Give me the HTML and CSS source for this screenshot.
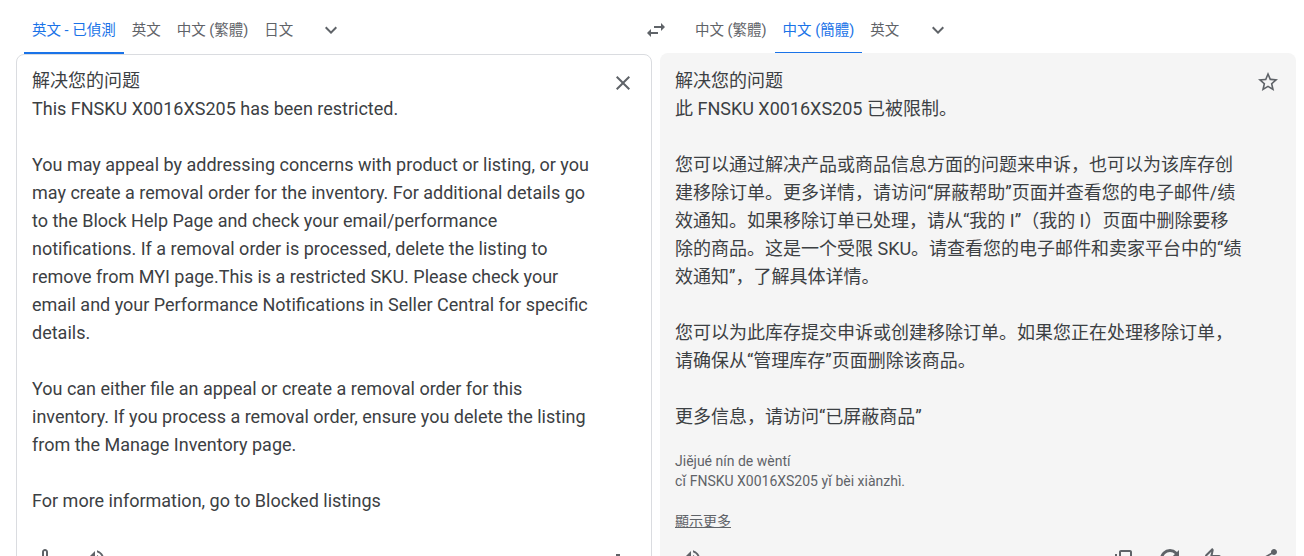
FILE: index.html
```html
<!DOCTYPE html>
<html lang="en">
<head>
    <meta charset="UTF-8">
    <meta name="viewport" content="width=device-width, initial-scale=1.0">
    <title>Translate</title>
    <link rel="stylesheet" href="styles.css">
</head>
<body>

    <div class="lang-bar">
        <div class="lang-side lang-source">
            <div class="tab active">英文 - 已偵測</div>
            <div class="tab">英文</div>
            <div class="tab">中文 (繁體)</div>
            <div class="tab">日文</div>
            <svg class="icon chevron" viewBox="0 0 24 24"><path d="M7.41 8.59 12 13.17l4.59-4.58L18 10l-6 6-6-6z"/></svg>
        </div>
        <svg class="icon swap" viewBox="0 0 24 24"><path d="M6.99 11 3 15l3.99 4v-3H14v-2H6.99zM21 9l-3.99-4v3H10v2h7.01v3z"/></svg>
        <div class="lang-side lang-target">
            <div class="tab">中文 (繁體)</div>
            <div class="tab active">中文 (簡體)</div>
            <div class="tab">英文</div>
            <svg class="icon chevron" viewBox="0 0 24 24"><path d="M7.41 8.59 12 13.17l4.59-4.58L18 10l-6 6-6-6z"/></svg>
        </div>
    </div>

    <div class="panels">
        <div class="card source">
            <div class="card-top">
                <div class="card-text">解决您的问题
This FNSKU X0016XS205 has been restricted.

You may appeal by addressing concerns with product or listing, or you may create a removal order for the inventory. For additional details go to the Block Help Page and check your email/performance notifications. If a removal order is processed, delete the listing to remove from MYI page.This is a restricted SKU. Please check your email and your Performance Notifications in Seller Central for specific details.

You can either file an appeal or create a removal order for this inventory. If you process a removal order, ensure you delete the listing from the Manage Inventory page.

For more information, go to Blocked listings</div>
                <svg class="icon close" viewBox="0 0 24 24"><path d="M19 6.41 17.59 5 12 10.59 6.41 5 5 6.41 10.59 12 5 17.59 6.41 19 12 13.41 17.59 19 19 17.59 13.41 12z"/></svg>
            </div>
            <div class="tools tools-source">
                <svg class="icon" viewBox="0 0 24 24"><path d="M12 14c1.66 0 3-1.34 3-3V5c0-1.66-1.34-3-3-3S9 3.34 9 5v6c0 1.66 1.34 3 3 3zm-1-9c0-.55.45-1 1-1s1 .45 1 1v6c0 .55-.45 1-1 1s-1-.45-1-1V5zm6 6c0 2.76-2.24 5-5 5s-5-2.24-5-5H5c0 3.53 2.61 6.43 6 6.92V21h2v-3.08c3.39-.49 6-3.39 6-6.92h-2z"/></svg>
                <svg class="icon" viewBox="0 0 24 24"><path d="M3 9v6h4l5 5V4L7 9H3zm13.5 3A4.5 4.5 0 0 0 14 7.97v8.05A4.5 4.5 0 0 0 16.5 12zM14 3.23v2.06a7 7 0 0 1 0 13.42v2.06a9 9 0 0 0 0-17.54z"/></svg>
                <svg class="icon tools-end" viewBox="0 0 24 24"><path d="M10 7h4v12h-4z"/></svg>
            </div>
        </div>

        <div class="card target">
            <div class="card-top">
                <div class="card-text">解决您的问题
此 FNSKU X0016XS205 已被限制。

您可以通过解决产品或商品信息方面的问题来申诉，也可以为该库存创建移除订单。更多详情，请访问“屏蔽帮助”页面并查看您的电子邮件/绩效通知。如果移除订单已处理，请从“我的 I”（我的 I）页面中删除要移除的商品。这是一个受限 SKU。请查看您的电子邮件和卖家平台中的“绩效通知”，了解具体详情。

您可以为此库存提交申诉或创建移除订单。如果您正在处理移除订单，请确保从“管理库存”页面删除该商品。

更多信息，请访问“已屏蔽商品”</div>
                <svg class="icon star" viewBox="0 0 24 24"><path d="m22 9.24-7.19-.62L12 2 9.19 8.63 2 9.24l5.46 4.73L5.82 21 12 17.27 18.18 21l-1.63-7.03L22 9.24zM12 15.4l-3.76 2.27 1-4.28-3.32-2.88 4.38-.38L12 6.1l1.71 4.04 4.38.38-3.32 2.88 1 4.28L12 15.4z"/></svg>
            </div>
            <div class="pinyin">Jiějué nín de wèntí
cǐ FNSKU X0016XS205 yǐ bèi xiànzhì.</div>
            <div class="more">顯示更多</div>
            <div class="tools tools-target">
                <svg class="icon" viewBox="0 0 24 24"><path d="M3 9v6h4l5 5V4L7 9H3zm13.5 3A4.5 4.5 0 0 0 14 7.97v8.05A4.5 4.5 0 0 0 16.5 12zM14 3.23v2.06a7 7 0 0 1 0 13.42v2.06a9 9 0 0 0 0-17.54z"/></svg>
                <div class="tools-right">
                    <svg class="icon copy" viewBox="0 0 24 24"><path d="M9 18c-1.1 0-2-.9-2-2V4c0-1.1.9-2 2-2h9c1.1 0 2 .9 2 2v12c0 1.1-.9 2-2 2H9zm0-2h9V4H9v12zm-4 6c-1.1 0-2-.9-2-2V6h2v14h11v2H5z"/></svg>
                    <svg class="icon feedback" viewBox="0 0 24 24"><path d="M12 2a10 10 0 1 0 10 10h-3a7 7 0 1 1-7-7c1.9 0 3.6.8 4.9 2L14 10h7V3l-2 2a10 10 0 0 0-7-3z"/></svg>
                    <svg class="icon rate" viewBox="0 0 24 24"><path d="M9 21h9c.83 0 1.54-.5 1.84-1.22l3.02-7.05c.09-.23.14-.47.14-.73v-2c0-1.1-.9-2-2-2h-6.31l.95-4.57.03-.32c0-.41-.17-.79-.44-1.06L14.17 1 7.58 7.59C7.22 7.95 7 8.45 7 9v10c0 1.1.9 2 2 2zM9 9l4.34-4.34L12 10h9v2l-3 7H9V9zM1 9h4v12H1z"/></svg>
                    <svg class="icon share" viewBox="0 0 24 24"><path d="M18 16.08c-.76 0-1.44.3-1.96.77L8.91 12.7c.05-.23.09-.46.09-.7s-.04-.47-.09-.7l7.05-4.11c.54.5 1.25.81 2.04.81 1.66 0 3-1.34 3-3s-1.34-3-3-3-3 1.34-3 3c0 .24.04.47.09.7L8.04 9.81C7.5 9.31 6.79 9 6 9c-1.66 0-3 1.34-3 3s1.34 3 3 3c.79 0 1.5-.31 2.04-.81l7.12 4.16c-.05.21-.08.43-.08.65 0 1.61 1.31 2.92 2.92 2.92s2.92-1.31 2.92-2.92-1.31-2.92-2.92-2.92z"/></svg>
                </div>
            </div>
        </div>
    </div>

</body>
</html>
```

FILE: styles.css
```css
* {
    box-sizing: border-box;
}
body {
    margin: 0;
    height: 556px;
    overflow: hidden;
    background: white;
    color: #3c4043;
    font-family: Roboto, "Noto Sans CJK SC", sans-serif;
    text-spacing-trim: space-all;
}
.icon {
    width: 24px;
    height: 24px;
    fill: #5f6368;
    flex-shrink: 0;
}
.lang-bar {
    display: flex;
    align-items: flex-start;
    height: 54px;
    padding-left: 24px;
}
.lang-side {
    display: flex;
    align-items: center;
    height: 54px;
}
.lang-source {
    width: 620px;
}
.lang-target {
    margin-left: 19px;
}
.lang-target .chevron {
    margin-left: 19px;
}
.swap {
    margin-top: 18px;
    flex-shrink: 0;
}
.tab {
    height: 54px;
    padding: 4px 8px 0;
    display: flex;
    align-items: center;
    font-size: 14.5px;
    color: #5f6368;
    font-family: Roboto, "Noto Sans CJK TC", sans-serif;
    border-bottom: 2px solid transparent;
    white-space: nowrap;
}
.tab.active {
    color: #1a73e8;
    border-bottom-color: #1a73e8;
}
.chevron {
    margin: 6px 0 0 18px;
}
.panels {
    display: flex;
    gap: 8px;
    padding: 0 8px 0 16px;
}
.card {
    width: 636px;
    height: 560px;
    border-radius: 8px;
}
.source {
    border: 1px solid #dadce0;
    padding: 12px 15px 0;
}
.target {
    background: #f5f5f5;
    margin-top: -1px;
    padding: 14px 16px 0 15px;
    height: 561px;
}
.card-top {
    display: flex;
    justify-content: space-between;
}
.card-text {
    width: 570px;
    font-size: 18px;
    line-height: 28px;
    white-space: pre-wrap;
}
.close {
    margin-top: 4px;
    margin-right: 1px;
}
.star {
    margin-top: 3px;
}
.pinyin {
    margin-top: 20px;
    font-size: 14px;
    line-height: 20px;
    color: #5f6368;
    white-space: pre-wrap;
}
.more {
    margin-top: 20px;
    font-size: 14px;
    line-height: 20px;
    color: #5f6368;
    text-decoration: underline;
    font-family: Roboto, "Noto Sans CJK TC", sans-serif;
}
.tools {
    display: flex;
    gap: 26px;
    margin-top: 32px;
}
.tools-source {
    margin-left: 1px;
}
.tools-end {
    margin-left: auto;
    margin-right: 6px;
}
.tools-target {
    justify-content: space-between;
    margin-top: 16px;
    margin-left: 4px;
}
.tools-right {
    display: flex;
}
.copy {
    margin-top: 1px;
}
.feedback {
    margin-left: 22px;
}
.rate {
    margin-left: 16px;
}
.share {
    margin-left: 34px;
}
```
